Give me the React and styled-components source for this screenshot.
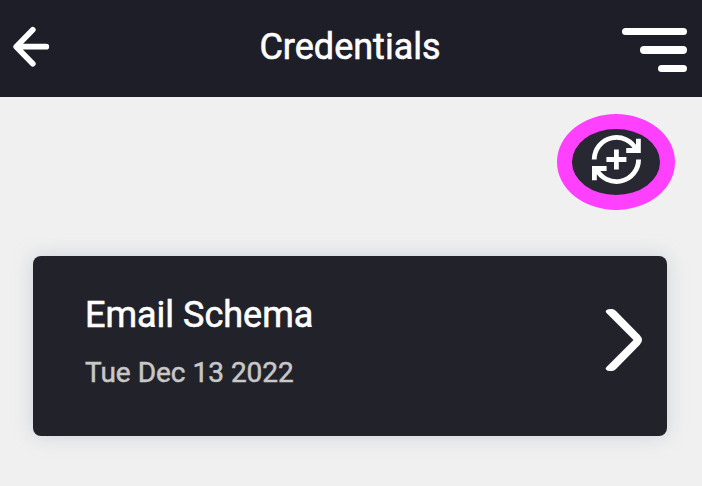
import styled, { createGlobalStyle } from "styled-components"

const GlobalStyle = createGlobalStyle`
  * {
    box-sizing: border-box;
  }

  body {
    margin: 0;
    background: #f0f0f0;
    font-family: Roboto, sans-serif;
    overflow: hidden;
  }
`

const Page = styled.div`
  height: 486px;
  background: #f0f0f0;
`

const Header = styled.header`
  display: grid;
  grid-template-columns: 100px 1fr 100px;
  align-items: center;
  height: 97px;
  padding: 0 15px 0 12px;
  background: #1e1e28;
`

const IconButton = styled.button`
  display: flex;
  padding: 0;
  border: none;
  background: transparent;
  cursor: pointer;

  svg {
    display: block;
  }
`

const BackButton = styled(IconButton)`
  margin-bottom: 3px;
`

const Title = styled.h1`
  margin: 0 0 3px;
  padding-left: 1px;
  font-size: 36px;
  font-weight: 400;
  line-height: 42px;
  text-align: center;
  color: #fff;
  -webkit-text-stroke: 0.6px #fff;
`

const MenuButton = styled(IconButton)`
  flex-direction: column;
  align-items: flex-end;
  gap: 11px;
  margin-top: 3px;
`

const MenuBar = styled.span`
  width: ${(props) => props.$width}px;
  height: 7.5px;
  border-radius: 4px;
  background: #fff;
`

const Actions = styled.div`
  display: flex;
  justify-content: flex-end;
  padding: 17px 27px 0 0;
`

const RefreshButton = styled(IconButton)`
  align-items: center;
  justify-content: center;
  width: 118px;
  height: 95.5px;
  padding-bottom: 5px;
  border: 15px solid #ff40ff;
  border-radius: 50%;
  background: #282832;
`

const Card = styled.article`
  display: flex;
  align-items: flex-start;
  justify-content: space-between;
  height: 180px;
  margin: 46.5px 35px 0 33px;
  padding: 0 25px 0 52px;
  border-radius: 8px;
  background: #22222b;
  box-shadow: 0 0 20px rgba(150, 165, 185, 0.4);

  svg {
    margin-top: 53px;
  }
`

const CardText = styled.div`
  display: flex;
  flex-direction: column;
  gap: 20px;
  padding-top: 38px;
`

const CardTitle = styled.h2`
  margin: 0;
  font-size: 36px;
  font-weight: 400;
  line-height: 42px;
  color: #fff;
  -webkit-text-stroke: 0.6px #fff;
`

const CardDate = styled.p`
  margin: 0;
  font-size: 28px;
  line-height: 34px;
  color: #c8c8c8;
  -webkit-text-stroke: 0.5px #c8c8c8;
`

const ArrowIcon = () => (
  <svg width="38" height="42" viewBox="0 0 38 42" fill="none">
    <path
      d="M20.8 3.8 4.2 20.7l16.6 17M5 20.7h29.3"
      stroke="#fff"
      strokeWidth="5.7"
      strokeLinecap="round"
      strokeLinejoin="round"
    />
  </svg>
)

const RefreshIcon = () => (
  <svg width="50" height="50" viewBox="-0.4 -0.5 50 50" fill="none" stroke="#fff" strokeWidth="4.8">
    <path d="M2.8 25A22.2 22.2 0 0 1 45 15.5" />
    <path d="M47.2 25A22.2 22.2 0 0 1 5 34.5" />
    <path d="M47 4.3V16H34.8" />
    <path d="M3 45.7V34H15.2" />
    <path d="M42 11.5 47 9V16H40ZM8 38.5 3 41V34H10Z" fill="#fff" stroke="none" />
    <path d="M25 15v20M15 25h20" />
  </svg>
)

const ChevronIcon = () => (
  <svg width="37" height="62" viewBox="0 0 37 62">
    <path
      d="M1 1.5Q2 0 5 0H7Q9 0 11 2L34.8 26.2Q37 28.5 37 31T34.8 35.8L11 60Q9 62 7 62H5Q2 62 1 60.5T1.5 58L28.5 31 1.5 4Q.2 2.5 1 1.5Z"
      fill="#fff"
    />
  </svg>
)

const App = () => {
  return (
    <>
      <GlobalStyle />
      <Page>
        <Header>
          <BackButton aria-label="Back">
            <ArrowIcon />
          </BackButton>
          <Title>Credentials</Title>
          <MenuButton aria-label="Menu">
            <MenuBar $width={65} />
            <MenuBar $width={47.5} />
            <MenuBar $width={29} />
          </MenuButton>
        </Header>

        <Actions>
          <RefreshButton aria-label="Refresh credentials">
            <RefreshIcon />
          </RefreshButton>
        </Actions>

        <Card>
          <CardText>
            <CardTitle>Email Schema</CardTitle>
            <CardDate>Tue Dec 13 2022</CardDate>
          </CardText>
          <ChevronIcon />
        </Card>
      </Page>
    </>
  )
}

export default App
